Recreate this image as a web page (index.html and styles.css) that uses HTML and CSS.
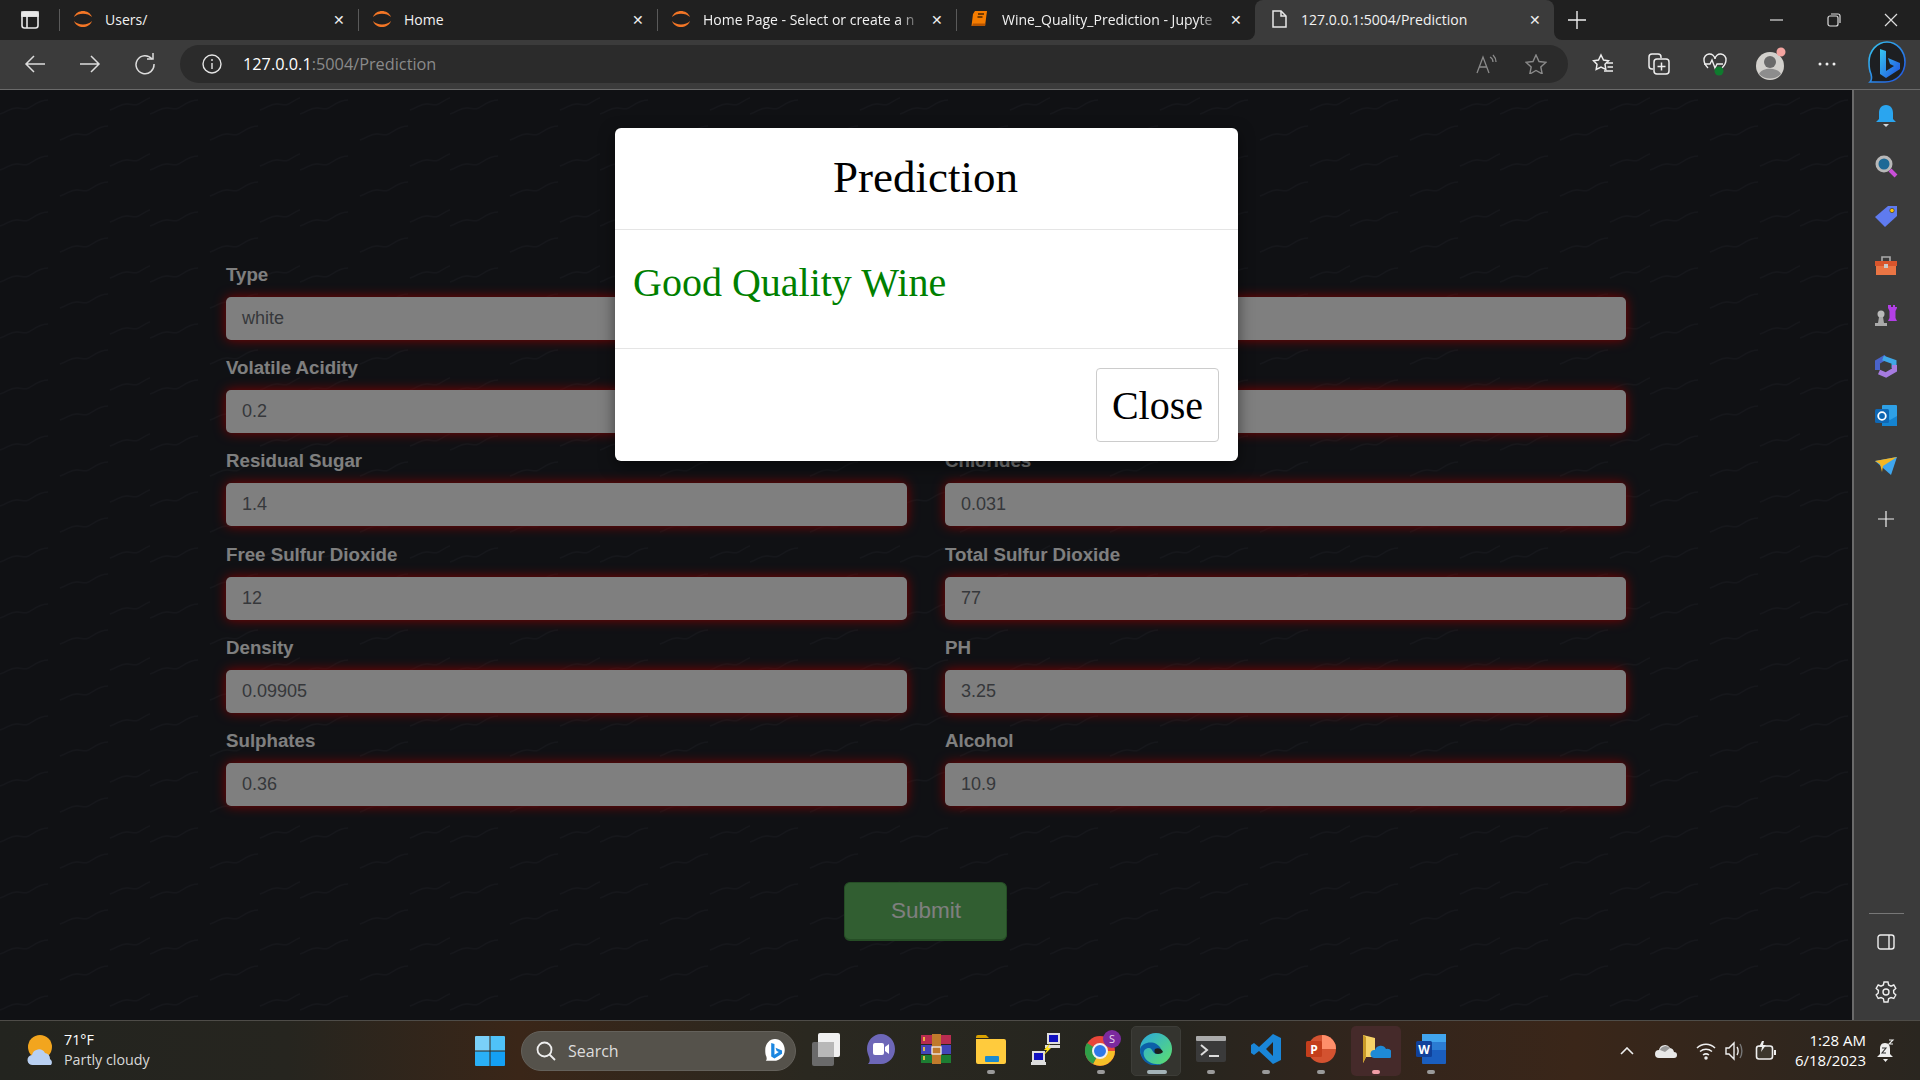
FILE: index.html
```html
<!DOCTYPE html>
<html lang="en">
<head>
  <meta charset="UTF-8" />
  <title>127.0.0.1:5004/Prediction</title>
  <link rel="stylesheet" href="styles.css">
</head>
<body>
  <!-- tab strip -->
  <div class="tabstrip">
    <div class="tab-menu">
      <svg width="18" height="18" viewBox="0 0 18 18" fill="none" stroke="#e8e8e8" stroke-width="1.6"><rect x="1" y="1" width="16" height="16" rx="2.5"/><path d="M1 5h16M6 5v12"/><path d="M1 1h16v4H1z" fill="#e8e8e8"/></svg>
    </div>
    <div class="tab">
      <svg class="favicon" viewBox="0 0 20 20" fill="#f37626"><path d="M1 8C4 0 16 0 19 8 15 3.500 5 3.500 1 8Z"/><path d="M1 12C4 20 16 20 19 12 15 16.500 5 16.500 1 12Z"/></svg>
      <span class="tab-title">Users/</span>
      <span class="tab-close">&#10005;</span>
    </div>
    <div class="tab">
      <svg class="favicon" viewBox="0 0 20 20" fill="#f37626"><path d="M1 8C4 0 16 0 19 8 15 3.500 5 3.500 1 8Z"/><path d="M1 12C4 20 16 20 19 12 15 16.500 5 16.500 1 12Z"/></svg>
      <span class="tab-title">Home</span>
      <span class="tab-close">&#10005;</span>
    </div>
    <div class="tab">
      <svg class="favicon" viewBox="0 0 20 20" fill="#f37626"><path d="M1 8C4 0 16 0 19 8 15 3.500 5 3.500 1 8Z"/><path d="M1 12C4 20 16 20 19 12 15 16.500 5 16.500 1 12Z"/></svg>
      <span class="tab-title fade">Home Page - Select or create a n</span>
      <span class="tab-close">&#10005;</span>
    </div>
    <div class="tab before-active">
      <svg class="favicon" viewBox="0 0 20 20"><path d="M5 2h12l-2 15H1.500L3 5z" fill="#f57c00"/><path d="M3 14.500h12.500L15 17H2z" fill="#b65400"/><path d="M8 5h6M7.500 8h5" stroke="#4a2500" stroke-width="1.300"/></svg>
      <span class="tab-title fade">Wine_Quality_Prediction - Jupyte</span>
      <span class="tab-close">&#10005;</span>
    </div>
    <div class="tab active">
      <svg class="favicon" viewBox="0 0 20 20" fill="none" stroke="#e8e8e8" stroke-width="1.500"><path d="M4 2h8l5 5v11H4z"/><path d="M12 2v5h5"/></svg>
      <span class="tab-title">127.0.0.1:5004/Prediction</span>
      <span class="tab-close">&#10005;</span>
    </div>
    <div class="new-tab">
      <svg width="18" height="18" viewBox="0 0 18 18" stroke="#eee" stroke-width="1.400"><path d="M9 0v18M0 9h18"/></svg>
    </div>
    <div class="window-btns">
      <svg width="14" height="14" viewBox="0 0 14 14" stroke="#ddd" stroke-width="1.200"><path d="M0 7h13"/></svg>
      <svg width="14" height="14" viewBox="0 0 14 14" fill="none" stroke="#ddd" stroke-width="1.200"><rect x="1" y="3" width="10" height="10" rx="2"/><path d="M4 1h7a2 2 0 0 1 2 2v7"/></svg>
      <svg width="14" height="14" viewBox="0 0 14 14" stroke="#ddd" stroke-width="1.200"><path d="M1 1l12 12M13 1L1 13"/></svg>
    </div>
  </div>

  <!-- address bar -->
  <div class="toolbar">
    <div class="nav-btn">
      <svg width="22" height="20" viewBox="0 0 22 20" fill="none" stroke="#ddd" stroke-width="1.500"><path d="M21 10H2M10 2l-8 8 8 8"/></svg>
    </div>
    <div class="nav-btn">
      <svg width="22" height="20" viewBox="0 0 22 20" fill="none" stroke="#ddd" stroke-width="1.500"><path d="M1 10h19M12 2l8 8-8 8"/></svg>
    </div>
    <div class="nav-btn">
      <svg width="22" height="22" viewBox="0 0 22 22" fill="none" stroke="#ddd" stroke-width="1.500"><path d="M18 6A9 9 0 1 0 20 11"/><path d="M13 6h6V0"/></svg>
    </div>
    <div class="address">
      <svg width="20" height="20" viewBox="0 0 20 20" fill="none" stroke="#e4e4e4" stroke-width="1.400"><circle cx="10" cy="10" r="9"/><path d="M10 9v6M10 5v2"/></svg>
      <span class="url"><b>127.0.0.1</b>:5004/Prediction</span>
      <span class="address-right">
        <svg width="22" height="20" viewBox="0 0 22 20" fill="none" stroke="#8a8a8a" stroke-width="1.300"><path d="M1 19L7 3l6 16M3 13h8"/><path d="M14 3c2 1 3 3 3 5M17 1c2 2 3 4 3 7"/></svg>
        <svg width="22" height="20" viewBox="0 0 22 20" fill="none" stroke="#8a8a8a" stroke-width="1.400"><path d="M11 1l3 6.500 7 .8-5.200 4.700 1.400 6.900L11 16.500 4.800 20l1.400-7L1 8.300l7-.8z"/></svg>
      </span>
    </div>
    <div class="tool-btn">
      <svg width="22" height="22" viewBox="0 0 22 22" fill="none" stroke="#eee" stroke-width="1.500"><path d="M9 2l2.500 5 5 .7-3.500 3.600.8 5.200L9 14l-4.800 2.500.8-5.200L1.500 7.700l5-.7z"/><path d="M15 10h6M15.500 14h5.500M12 18h9"/></svg>
    </div>
    <div class="tool-btn">
      <svg width="22" height="24" viewBox="0 0 22 24" fill="none" stroke="#eee" stroke-width="1.500"><path d="M5 17H4a3 3 0 0 1-3-3L1 5a3 3 0 0 1 3-3h6a3 3 0 0 1 3 3v1"/><rect x="6" y="7" width="15" height="15" rx="3"/><path d="M13.500 10.500v8M9.500 14.500h8"/></svg>
    </div>
    <div class="tool-btn">
      <svg width="24" height="24" viewBox="0 0 24 24" fill="none" stroke="#eee" stroke-width="1.400"><path d="M5 16C2 13 1 11 1 8a5.500 5.500 0 0 1 11-1 5.500 5.500 0 0 1 11 1c0 3-1 5-4 8"/><path d="M1 12h6l2-4 3 8 2-4h6"/><circle cx="16" cy="19" r="4.500" fill="#0f7b2e" stroke="none"/></svg>
    </div>
    <div class="tool-btn">
      <svg width="30" height="34" viewBox="0 0 30 34"><circle cx="14" cy="19" r="14" fill="#d2d0cc"/><circle cx="14" cy="15" r="6" fill="#6a6a6a"/><path d="M3 27c3-7 19-7 22 0-6 6-16 6-22 0z" fill="#8d8d8d"/><circle cx="25" cy="5" r="4.500" fill="#f4a4a0"/></svg>
    </div>
    <div class="tool-btn">
      <svg width="18" height="4" viewBox="0 0 18 4" fill="#eee"><circle cx="2" cy="2" r="1.500"/><circle cx="9" cy="2" r="1.500"/><circle cx="16" cy="2" r="1.500"/></svg>
    </div>
    <div class="bing-btn">
      <svg width="40" height="48" viewBox="0 0 40 48">
        <defs><linearGradient id="bing-a" x1="0" y1="0" x2="1" y2="1"><stop offset="0" stop-color="#36c6f0"/><stop offset="1" stop-color="#2050e0"/></linearGradient></defs>
        <path d="M20 2c10 0 18 9 18 20 0 12-9 20-20 20H3c2-2 2-4 1-8-2-4-2-8-2-12C2 11 10 2 20 2z" fill="#1d1f22" stroke="url(#bing-a)" stroke-width="1.600"/>
        <path d="M13 9l6 2v20l8-5-4-2-2-6 12 5v6l-14 9-6-4z" fill="url(#bing-a)"/>
      </svg>
    </div>
  </div>

  <div class="browser">
    <!-- the page itself -->
    <main class="page">
      <form class="form">
        <div class="fields">
          <div class="field"><label>Type</label><div class="input">white</div></div>
          <div class="field"><label>Fixed Acidity</label><div class="input">6.2</div></div>
          <div class="field"><label>Volatile Acidity</label><div class="input">0.2</div></div>
          <div class="field"><label>Citric Acid</label><div class="input">0.29</div></div>
          <div class="field"><label>Residual Sugar</label><div class="input">1.4</div></div>
          <div class="field"><label>Chlorides</label><div class="input">0.031</div></div>
          <div class="field"><label>Free Sulfur Dioxide</label><div class="input">12</div></div>
          <div class="field"><label>Total Sulfur Dioxide</label><div class="input">77</div></div>
          <div class="field"><label>Density</label><div class="input">0.09905</div></div>
          <div class="field"><label>PH</label><div class="input">3.25</div></div>
          <div class="field"><label>Sulphates</label><div class="input">0.36</div></div>
          <div class="field"><label>Alcohol</label><div class="input">10.9</div></div>
        </div>
        <div class="submit-row"><button type="button" class="submit">Submit</button></div>
      </form>

      <div class="backdrop"></div>
      <div class="modal">
        <div class="modal-header">Prediction</div>
        <div class="modal-body">Good Quality Wine</div>
        <div class="modal-footer"><button type="button" class="close-btn">Close</button></div>
      </div>
    </main>

    <!-- edge sidebar -->
    <aside class="sidebar">
      <div class="side-icons">
        <svg width="24" height="24" viewBox="0 0 24 24"><path d="M12 1c5 0 7 4 7 8v6l3 3H2l3-3V9c0-4 2-8 7-8z" fill="#2aa5ef"/><path d="M9 20h6l-3 3z" fill="#cfd4d8"/></svg>
        <svg width="24" height="24" viewBox="0 0 24 24"><circle cx="10" cy="10" r="7" fill="#1d6a96" stroke="#b8b8b8" stroke-width="3"/><path d="M16 16l6 6" stroke="#c94fd8" stroke-width="4"/></svg>
        <svg width="24" height="24" viewBox="0 0 24 24"><path d="M14 2h9v10L11 23 1 13z" fill="#5f7bf0"/><circle cx="18" cy="6.500" r="2.200" fill="#ffc400" stroke="#444" stroke-width=".8"/></svg>
        <svg width="24" height="24" viewBox="0 0 24 24"><path d="M8 7V3h8v4" fill="none" stroke="#aaa" stroke-width="1.600"/><path d="M1 7h22v5H1z" fill="#d8552c"/><path d="M2 12h20v9H2z" fill="#ea7544"/><rect x="10" y="10" width="4" height="4" fill="#c9c9c9"/></svg>
        <svg width="24" height="24" viewBox="0 0 24 24"><path d="M15 1h2v2h2V1h2v2h2v1l-1.500 3v7l1.500 3H14l1.500-3V7L14 4V1z" fill="#b23fe6"/><circle cx="7" cy="10" r="3.500" fill="#b9b9b9"/><path d="M5 13h4l1 6h3v3H1v-3h3z" fill="#a9a9a9"/></svg>
        <svg width="24" height="24" viewBox="0 0 24 24" fill="none" stroke-width="5"><path d="M3.500 16V8L12 3" stroke="#4a63c9"/><path d="M9 4l11 4v6" stroke="#3fa8e8"/><path d="M20.500 11v5L12 21l-7-3" stroke="#a67be0"/></svg>
        <svg width="24" height="24" viewBox="0 0 24 24"><rect x="8" y="1" width="15" height="21" rx="1" fill="#2ea0e6"/><path d="M8 12l8 4 7-4v10H8z" fill="#1483d0"/><rect x="1" y="5" width="14" height="14" rx="1.500" fill="#0f67b3"/><circle cx="8" cy="12" r="3.800" fill="none" stroke="#fff" stroke-width="1.800"/></svg>
        <svg width="24" height="24" viewBox="0 0 24 24"><path d="M1 7l22-4-6 18-8-7z" fill="#3fa6ee"/><path d="M1 7l22-4L9 12l-1 6-2-8z" fill="#f4b623"/></svg>
        <svg class="side-add" width="16" height="16" viewBox="0 0 16 16" stroke="#eee" stroke-width="1.200"><path d="M8 0v16M0 8h16"/></svg>
      </div>
      <div class="side-bottom">
        <div class="side-line"></div>
        <svg width="18" height="16" viewBox="0 0 18 16" fill="none" stroke="#eee" stroke-width="1.400"><rect x="1" y="1" width="16" height="14" rx="2.500"/><path d="M12 1v14"/></svg>
        <svg class="side-gear" width="22" height="22" viewBox="0 0 22 22" fill="none" stroke="#eee" stroke-width="1.400"><circle cx="11" cy="11" r="3"/><path d="M9 1h4l.6 3 2.400 1.200 2.800-1.200 2 3.400-2.200 2 .1 2.600 2.100 2-2 3.500-2.800-1-2.400 1.200L13 21H9l-.6-3.300L6 16.500l-2.800 1-2-3.500 2.100-2 .1-2.600-2.200-2 2-3.400L6 5.200 8.400 4z"/></svg>
      </div>
    </aside>
  </div>

  <!-- windows taskbar -->
  <footer class="taskbar">
    <div class="weather">
      <svg width="30" height="34" viewBox="0 0 30 34"><circle cx="14" cy="13" r="12" fill="#f2a51e"/><path d="M7 31a5 5 0 0 1-1-10 7 7 0 0 1 13-2 6 6 0 0 1 5 6 4 4 0 0 1 1 6z" fill="#b9d0f2"/></svg>
      <div class="weather-text"><span>71°F</span><span class="weather-sub">Partly cloudy</span></div>
    </div>
    <div class="win-logo">
      <svg width="30" height="30" viewBox="0 0 30 30"><path d="M0 1a1 1 0 0 1 1-1h13.500v14.500H0z" fill="#7ad0f8"/><path d="M15.500 0H29a1 1 0 0 1 1 1v13.500H15.500z" fill="#4fc2f8"/><path d="M0 15.500h14.500V30H1a1 1 0 0 1-1-1z" fill="#2ab0f6"/><path d="M15.500 15.500H30V29a1 1 0 0 1-1 1H15.500z" fill="#14a0f5"/></svg>
    </div>
    <div class="search">
      <svg width="20" height="20" viewBox="0 0 20 20" fill="none" stroke="#eee" stroke-width="1.800"><circle cx="8.500" cy="8.500" r="7"/><path d="M13.500 13.500L19 19"/></svg>
      <span class="search-text">Search</span>
      <svg class="search-bing" width="24" height="26" viewBox="0 0 40 48">
        <path d="M20 2c10 0 18 9 18 20 0 12-9 20-20 20H3c2-2 2-4 1-8-2-4-2-8-2-12C2 11 10 2 20 2z" fill="#fff"/>
        <path d="M13 9l6 2v20l8-5-4-2-2-6 12 5v6l-14 9-6-4z" fill="#1b86e0"/>
      </svg>
    </div>
    <div class="apps">
      <div class="app">
        <svg width="30" height="34" viewBox="0 0 30 34"><rect x="1" y="10" width="22" height="24" rx="2" fill="#6a6a6a"/><rect x="7" y="1" width="22" height="24" rx="2" fill="#f0f0f0"/><rect x="7" y="10" width="16" height="15" fill="#b8b8b8"/></svg>
      </div>
      <div class="app">
        <svg class="nudge-down" width="30" height="34" viewBox="0 0 30 34"><path d="M15 1c8 0 14 7 14 15s-6 15-14 15H2c2-2 2-4 1-7-1-3-2-5-2-8C1 8 7 1 15 1z" fill="#6d67b8"/><rect x="7" y="10" width="11" height="12" rx="2" fill="#fff"/><path d="M19 14l4-3v10l-4-3z" fill="#fff"/></svg>
      </div>
      <div class="app">
        <svg width="30" height="30" viewBox="0 0 30 30"><rect y="1" width="30" height="9" fill="#b82c50"/><rect y="11" width="30" height="9" fill="#4444b8"/><rect y="21" width="30" height="8" fill="#1d7d32"/><rect x="11" width="9" height="30" fill="#c07a2c"/><rect x="11" y="13" width="9" height="7" fill="none" stroke="#eee" stroke-width="1.300"/><path d="M3 3v4M3 13v4M3 22v4" stroke="#ffd23f" stroke-width="1.600"/></svg>
      </div>
      <div class="app has-dot">
        <svg width="30" height="30" viewBox="0 0 30 30"><path d="M0 3a2 2 0 0 1 2-2h8l3 3h-13z" fill="#d9a100"/><path d="M0 5h28a2 2 0 0 1 2 2v21a2 2 0 0 1-2 2H2a2 2 0 0 1-2-2z" fill="#ffcb3d"/><rect x="9" y="22" width="14" height="6" rx="1" fill="#1a8ad0"/></svg>
      </div>
      <div class="app">
        <svg width="30" height="34" viewBox="0 0 30 34"><rect x="16" y="1" width="13" height="11" fill="#ddd"/><rect x="18" y="3" width="9" height="7" fill="#1010c0"/><rect x="14" y="13" width="15" height="3" fill="#ddd"/><rect x="1" y="19" width="13" height="11" fill="#ddd"/><rect x="3" y="21" width="9" height="7" fill="#1010c0"/><rect x="0" y="30" width="15" height="3" fill="#ddd"/><path d="M19 11l-6 7h3l-4 6 8-8h-3z" fill="#ffe01a"/></svg>
      </div>
      <div class="app has-dot chrome">
        <svg width="36" height="38" viewBox="0 0 36 38"><circle cx="15" cy="21" r="15" fill="#e8473a"/><path d="M15 21h15a15 15 0 0 1-22 13z" fill="#f5c028"/><path d="M15 21L8 34A15 15 0 0 1 2 13z" fill="#2f9e48"/><circle cx="15" cy="21" r="7" fill="#2e78e8" stroke="#f0f0f0" stroke-width="2"/><circle cx="27" cy="9" r="9" fill="#7b2a9e"/><text x="27" y="13" class="badge-s">S</text></svg>
      </div>
      <div class="app running">
        <svg width="32" height="32" viewBox="0 0 32 32"><defs><linearGradient id="edge-a" x1="0" y1="0" x2="1" y2="1"><stop offset="0" stop-color="#2aa8e0"/><stop offset="1" stop-color="#5ee06a"/></linearGradient></defs><circle cx="16" cy="16" r="16" fill="url(#edge-a)"/><path d="M0 16C2 9 16 6 21 16c1 3-1 5-4 5-5 0-4-6-8-6-5 0-7 5-4 10 3 5 12 8 18 5-8 6-23 1-23-14z" fill="#0c5fa8"/><path d="M18 21c-4 0-4-3-3-5 3-2 7 0 8 3-1 1-3 2-5 2z" fill="#1d1f1c"/></svg>
      </div>
      <div class="app has-dot">
        <svg width="30" height="26" viewBox="0 0 30 26"><rect width="30" height="26" rx="2" fill="#3a3a3a"/><rect width="30" height="5" rx="1" fill="#aaa"/><path d="M5 9l6 5-6 5" fill="none" stroke="#ddd" stroke-width="2"/><path d="M13 20h10" stroke="#ddd" stroke-width="2"/></svg>
      </div>
      <div class="app has-dot">
        <svg width="30" height="30" viewBox="0 0 30 30"><path d="M22 0l8 4v22l-8 4L8 17l-5 4-3-2v-8l3-2 5 4zM22 8l-7 7 7 7z" fill="#1a86d8" fill-rule="evenodd"/></svg>
      </div>
      <div class="app has-dot">
        <svg width="30" height="30" viewBox="0 0 30 30"><circle cx="16" cy="15" r="14" fill="#d35230"/><path d="M16 1a14 14 0 0 1 14 14H16z" fill="#ff8f6b"/><rect y="7" width="16" height="16" rx="1.500" fill="#c43e1c"/><text x="8" y="20" class="badge-p">P</text></svg>
      </div>
      <div class="app pinned has-dot">
        <svg width="30" height="32" viewBox="0 0 30 32"><path d="M2 2l12 3v19H5l-3 6z" fill="#f6d268"/><path d="M2 2l3 2v20l-3 6z" fill="#c99a28"/><path d="M13 25a4 4 0 0 1 1-8 6 6 0 0 1 11-1 5 5 0 0 1 4 9z" fill="#1e8ad6"/></svg>
      </div>
      <div class="app has-dot">
        <svg width="30" height="30" viewBox="0 0 30 30"><rect x="6" width="24" height="30" rx="1" fill="#1a5ebf"/><rect x="6" width="24" height="8" fill="#41a5ee"/><rect x="6" y="8" width="24" height="8" fill="#2b7cd3"/><rect y="7" width="16" height="16" rx="1.500" fill="#10419a"/><text x="8" y="20" class="badge-p">W</text></svg>
      </div>
    </div>
    <div class="tray">
      <svg class="tray-chevron" width="14" height="8" viewBox="0 0 14 8" fill="none" stroke="#eee" stroke-width="1.600"><path d="M1 7l6-6 6 6"/></svg>
      <svg class="tray-cloud" width="22" height="14" viewBox="0 0 22 14"><path d="M4 14a4 4 0 0 1 0-8 6 6 0 0 1 11-2 5 5 0 0 1 4 4 3 3 0 0 1 0 6z" fill="#e8e8e8"/><path d="M5 6a6 6 0 0 1 10-2l-5 4z" fill="#999"/></svg>
      <svg class="tray-wifi" width="20" height="18" viewBox="0 0 20 18" fill="none" stroke="#eee" stroke-width="1.500"><path d="M1 6c5-5 13-5 18 0M4 9.500c3.500-3 8.500-3 12 0M7 13c2-1.500 4-1.500 6 0"/><circle cx="10" cy="16" r="1" fill="#eee"/></svg>
      <svg class="tray-vol" width="20" height="20" viewBox="0 0 20 20" fill="none" stroke="#eee" stroke-width="1.400"><path d="M1 7h3l5-5v16l-5-5H1z"/><path d="M12 6c1.500 2 1.500 6 0 8"/><path d="M15 3c2.500 4 2.500 10 0 14" stroke="#777"/></svg>
      <svg class="tray-batt" width="22" height="20" viewBox="0 0 22 20"><rect x="1.500" y="5" width="16" height="13" rx="2.500" fill="#3c362d" stroke="#eee" stroke-width="1.600"/><rect x="19" y="9" width="2" height="5" fill="#eee"/><path d="M7 0L4 6h3l-1 5 5-7H8l1-4z" fill="#eee"/></svg>
      <div class="clock"><span>1:28 AM</span><span>6/18/2023</span></div>
      <svg class="tray-bell" width="18" height="24" viewBox="0 0 18 24"><path d="M8 4c4 0 5 3 5 6v5l3 3H0l3-3v-5c0-3 1-6 5-6z" fill="#eee"/><path d="M6 20h5l-2.500 3z" fill="#eee"/><path d="M5 9h4L5 14h4" fill="none" stroke="#333" stroke-width="1.100"/><path d="M12 1h4l-4 4h4" fill="none" stroke="#eee" stroke-width="1.100"/></svg>
    </div>
  </footer>
</body>
</html>
```

FILE: styles.css
```css
* {
  box-sizing: border-box;
}
html, body {
  margin: 0;
  height: 100%;
}
body {
  width: 1920px;
  height: 1080px;
  overflow: hidden;
  display: flex;
  flex-direction: column;
  background: #202020;
  font-family: "Open Sans", "Noto Sans", sans-serif;
  color: #fff;
}
svg {
  flex: none;
  display: block;
}

/* tab strip */
.tabstrip {
  height: 40px;
  flex: none;
  display: flex;
  background: linear-gradient(#202020 50%, #3b3b3b 50%);
}
.tab-menu {
  width: 59px;
  display: flex;
  align-items: center;
  padding-left: 21px;
  background: #202020;
}
.tab {
  width: 299px;
  display: flex;
  align-items: center;
  padding: 0 0 2px 14px;
  position: relative;
  font-size: 14px;
  background: #202020;
}
.tab::before {
  content: "";
  position: absolute;
  left: 0;
  top: 9px;
  height: 22px;
  width: 1px;
  background: #5a5a5a;
}
.tab.before-active {
  border-bottom-right-radius: 8px;
}
.tab.active {
  background: #3b3b3b;
  border-radius: 8px 8px 0 0;
}
.tab.active::before {
  display: none;
}
.favicon {
  width: 20px;
  height: 20px;
  margin-right: 12px;
}
.tab-title {
  flex: 1;
  overflow: hidden;
  white-space: nowrap;
  color: #f2f2f2;
}
.tab-title.fade {
  -webkit-mask-image: linear-gradient(to right, #000 88%, transparent 100%);
  mask-image: linear-gradient(to right, #000 88%, transparent 100%);
}
.tab-close {
  width: 32px;
  padding-right: 13px;
  text-align: right;
  font-size: 14px;
  color: #eee;
}
.new-tab {
  width: 46px;
  display: flex;
  align-items: center;
  justify-content: center;
  background: #202020;
  border-bottom-left-radius: 8px;
}
.window-btns {
  flex: 1;
  display: flex;
  align-items: center;
  justify-content: flex-end;
  gap: 43px;
  padding-right: 22px;
  background: #202020;
}

/* address bar */
.toolbar {
  height: 50px;
  flex: none;
  display: flex;
  align-items: center;
  padding: 0 0 2px 7px;
  background: #3b3b3b;
  border-bottom: 1px solid #6a6a6a;
  box-shadow: inset 0 -1px 0 #3b3b3b;
}
.nav-btn {
  width: 55px;
  display: flex;
  justify-content: center;
}
.address {
  width: 1388px;
  height: 38px;
  margin: 0 7px 0 8px;
  padding: 0 21px 0 22px;
  display: flex;
  align-items: center;
  border-radius: 19px;
  background: #2b2b2b;
}
.url {
  margin-left: 21px;
  font-size: 16.300px;
  color: #8a8a8a;
}
.url b {
  font-weight: 400;
  color: #fff;
}
.address-right {
  margin-left: auto;
  display: flex;
  align-items: center;
  gap: 27px;
}
.tool-btn {
  width: 56px;
  display: flex;
  justify-content: center;
}
.bing-btn {
  margin-left: 12px;
}

.browser {
  flex: 1;
  display: flex;
  min-height: 0;
}

/* page */
.page {
  flex: 1;
  position: relative;
  overflow: hidden;
  background-color: #202229;
  background-image: url("data:image/svg+xml,%3Csvg xmlns='http://www.w3.org/2000/svg' width='150' height='56'%3E%3Cpath d='M0 24c8-2 10-7 18-6s8 2 14-2 10-6 16-6M60 50c8-2 10-7 18-6s8 2 14-2 10-6 16-6M110 20c8-2 10-7 18-6s8 2 14-2 10-6 16-6' fill='none' stroke='%232d2f37' stroke-width='1.500'/%3E%3C/svg%3E");
  font-family: "Liberation Sans", Arial, sans-serif;
}
.form {
  padding: 173px 226px 0;
}
.fields {
  display: grid;
  grid-template-columns: 681px 681px;
  column-gap: 38px;
  row-gap: 16.200px;
}
.field label {
  display: block;
  height: 21px;
  margin-bottom: 13px;
  font-size: 18.700px;
  line-height: 24px;
  font-weight: 700;
  color: #fff;
}
.input {
  height: 43px;
  padding: 0 16px;
  line-height: 42px;
  font-size: 18px;
  color: #6d7177;
  background: #fff;
  border-radius: 5px;
  box-shadow: 0 0 12px #ff0000;
}
.submit-row {
  display: flex;
  justify-content: center;
  margin-top: 76px;
  padding-right: 2px;
}
.submit {
  width: 163px;
  height: 59px;
  padding: 0 0 0 2px;
  font-family: inherit;
  font-size: 22.500px;
  color: #fff;
  background: #62bc62;
  border: 1px solid #4a9a4a;
  border-bottom-width: 2px;
  border-radius: 6px;
}
.backdrop {
  position: absolute;
  inset: 0;
  background: rgba(0, 0, 0, 0.5);
}
.modal {
  position: absolute;
  top: 38px;
  left: 615px;
  width: 623px;
  height: 333px;
  display: flex;
  flex-direction: column;
  background: #fff;
  border-radius: 6px;
  box-shadow: 0 5px 15px rgba(0, 0, 0, 0.5);
  font-family: "Liberation Serif", "Times New Roman", serif;
  color: #000;
}
.modal-header {
  height: 102px;
  flex: none;
  display: flex;
  align-items: center;
  justify-content: center;
  border-bottom: 1px solid #e5e5e5;
  font-size: 45px;
  padding: 0 2px 3px 0;
}
.modal-body {
  height: 119px;
  flex: none;
  display: flex;
  align-items: center;
  padding: 0 18px 13px;
  border-bottom: 1px solid #e5e5e5;
  font-size: 40px;
  color: #008000;
}
.modal-footer {
  flex: 1;
  display: flex;
  align-items: center;
  justify-content: flex-end;
  padding: 0 19px 0 0;
}
.close-btn {
  width: 123px;
  height: 74px;
  padding: 1px 0 0;
  font-family: inherit;
  font-size: 40px;
  color: #000;
  background: #fff;
  border: 1px solid #ccc;
  border-radius: 4px;
}

/* sidebar */
.sidebar {
  width: 68px;
  flex: none;
  display: flex;
  flex-direction: column;
  align-items: center;
  padding: 0 2px 17px 0;
  background: #3b3b3b;
  border-left: 2px solid #6a6a6a;
}
.side-icons {
  height: 460px;
  padding-top: 14px;
  display: flex;
  flex-direction: column;
  align-items: center;
  gap: 26px;
}
.side-add {
  margin-top: 7px;
}
.side-bottom {
  margin-top: auto;
  display: flex;
  flex-direction: column;
  align-items: center;
  gap: 20px;
}
.side-gear {
  margin-top: 11px;
}
.side-line {
  width: 35px;
  height: 1px;
  background: #777;
}

/* taskbar */
.taskbar {
  height: 60px;
  flex: none;
  display: flex;
  align-items: center;
  background: linear-gradient(to right, #23241f 0%, #26251f 15%, #3a2618 27%, #2a2820 42%, #25251f 60%, #33251c 72%, #3a2619 82%, #2a2620 100%);
  border-top: 1px solid #4e4c48;
  font-family: "Open Sans", "Noto Sans", sans-serif;
  font-size: 14px;
}
.weather {
  width: 475px;
  display: flex;
  align-items: center;
  padding-left: 26px;
  gap: 8px;
}
.weather-text {
  display: flex;
  flex-direction: column;
  line-height: 20px;
  font-size: 14.300px;
  margin-top: -2px;
}
.weather-sub {
  color: #d8d8d8;
}
.win-logo {
  width: 46px;
}
.search {
  width: 275px;
  height: 40px;
  display: flex;
  align-items: center;
  padding-left: 14px;
  border-radius: 20px;
  background: #55524b;
  border: 1px solid #64615b;
}
.search-text {
  margin-left: 12px;
  font-size: 16px;
  color: #ddd;
}
.search-bing {
  margin-left: auto;
  margin-right: 8px;
}
.apps {
  display: flex;
  gap: 5px;
  margin-left: 5px;
}
.app {
  width: 50px;
  height: 50px;
  display: flex;
  align-items: center;
  justify-content: center;
  position: relative;
  border-radius: 5px;
  padding-bottom: 4px;
}
.app.chrome {
  padding-left: 4px;
}
.nudge-down {
  margin-top: 2px;
}
.app.has-dot::after {
  content: "";
  position: absolute;
  left: 21px;
  bottom: 2px;
  width: 8px;
  height: 4px;
  border-radius: 2px;
  background: #9a9a9a;
}
.app.running {
  background: #34342f;
  border: 1px solid #3d3d38;
}
.app.running::after {
  content: "";
  position: absolute;
  left: 15px;
  bottom: 1px;
  width: 20px;
  height: 4px;
  border-radius: 2px;
  background: #a3b3b8;
}
.app.pinned {
  background: #452a2a;
}
.app.pinned::after {
  background: #f19ca6;
}
.badge-s {
  font-family: "Open Sans", sans-serif;
  font-size: 11px;
  fill: #e8d8f0;
  text-anchor: middle;
}
.badge-p {
  font-family: "Open Sans", sans-serif;
  font-size: 12px;
  font-weight: 700;
  fill: #fff;
  text-anchor: middle;
}
.tray {
  flex: 1;
  display: flex;
  align-items: center;
  padding-left: 164px;
}
.tray-cloud {
  margin-left: 21px;
}
.tray-wifi {
  margin-left: 19px;
}
.tray-vol {
  margin-left: 9px;
}
.tray-batt {
  margin-left: 10px;
}
.clock {
  width: 89px;
  display: flex;
  flex-direction: column;
  align-items: flex-end;
  line-height: 20px;
  font-size: 15px;
  margin-top: -2px;
}
.tray-bell {
  margin-left: 11px;
}
```
